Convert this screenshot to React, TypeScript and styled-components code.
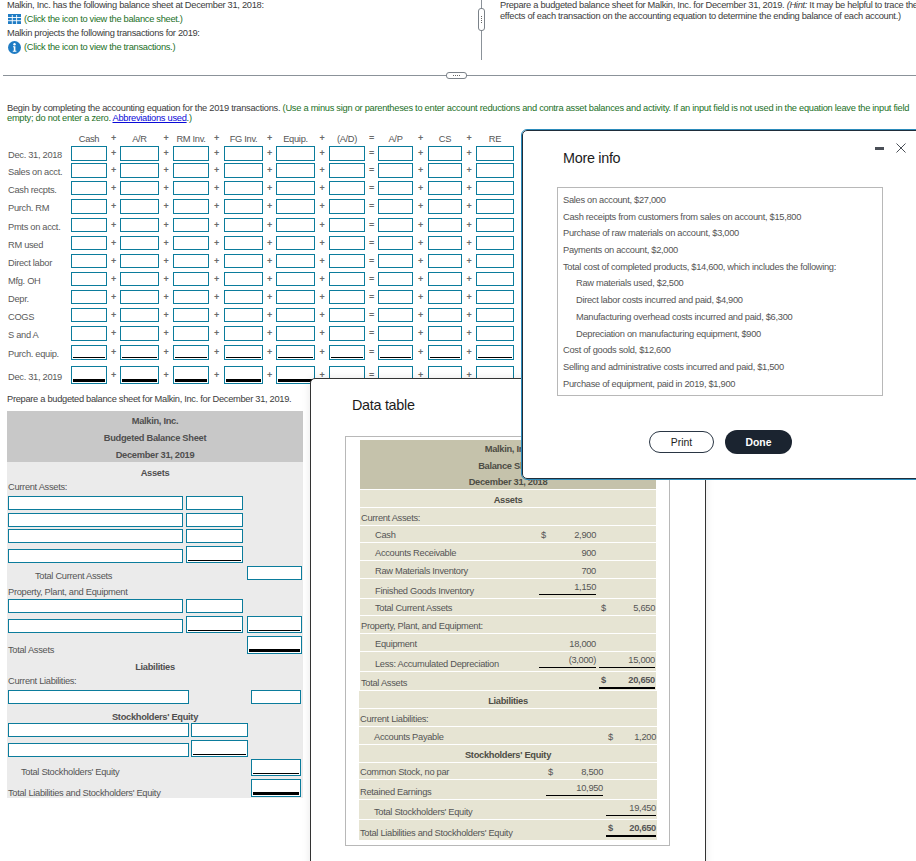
import React from "react";
import styled, { createGlobalStyle } from "styled-components";

const GlobalStyle = createGlobalStyle`
  html, body {
    margin: 0;
    padding: 0;
    background: #fff;
  }
  body {
    font-family: "Liberation Sans", Arial, sans-serif;
  }
`;

const FIELD = "#0b7c9c";

const Page = styled.div`
  position: relative;
  width: 916px;
  height: 861px;
  overflow: hidden;
  background: #fff;
  font-size: 9.3px;
  letter-spacing: -0.3px;
  color: #444;
`;

/* top panes */
const TopPanes = styled.div`
  display: flex;
  height: 60px;
`;

const LeftPane = styled.div`
  flex: none;
  width: 481px;
  padding: 0 0 0 7px;
  box-sizing: border-box;
  margin-top: -2px;
  line-height: 14px;
  color: #3c3c3c;
`;

const IconLine = styled.div`
  display: flex;
  align-items: center;
  gap: 3px;
  height: 14px;
  color: #23701f;
  svg {
    margin-left: 1px;
    flex: none;
  }
`;

const VerticalRule = styled.div`
  position: relative;
  flex: none;
  width: 1px;
  background: #8b9299;
`;

const VerticalGrip = styled.div`
  position: absolute;
  left: -3px;
  top: 8px;
  width: 5px;
  height: 21px;
  border: 1px solid #7b8289;
  border-radius: 3px;
  background: #fff;
  &::after {
    content: "";
    position: absolute;
    left: 2px;
    top: 7px;
    width: 1px;
    height: 7px;
    background: repeating-linear-gradient(#666 0 1px, transparent 1px 2px);
  }
`;

const RightPane = styled.div`
  padding-left: 18px;
  white-space: nowrap;
  line-height: 11px;
  color: #3c3c3c;
  em {
    font-style: italic;
  }
`;

const HorizontalRule = styled.div`
  position: relative;
  margin: 15px 0 0 3px;
  height: 1px;
  background: #8b9299;
`;

const HorizontalGrip = styled.div`
  position: absolute;
  left: 443px;
  top: -3px;
  width: 19px;
  height: 5px;
  border: 1px solid #7b8289;
  border-radius: 3px;
  background: #fff;
  &::after {
    content: "";
    position: absolute;
    left: 6px;
    top: 2px;
    width: 7px;
    height: 1px;
    background: repeating-linear-gradient(90deg, #666 0 1px, transparent 1px 2px);
  }
`;

const Instructions = styled.div`
  margin: 27px 0 0 7px;
  line-height: 10px;
  letter-spacing: -0.275px;
  white-space: nowrap;
  color: #3c3c3c;
  span {
    color: #23701f;
  }
  a {
    color: #0a0ad8;
    text-decoration: underline;
  }
`;

/* accounting equation */
const Equation = styled.div`
  margin-top: 8px;
`;

const EqHeader = styled.div`
  display: flex;
  height: 15px;
  align-items: center;
  padding-left: 71px;
  color: #555;
`;

const EqRow = styled.div<{ $pitch: number }>`
  display: flex;
  height: ${(p) => p.$pitch}px;
  align-items: flex-start;
`;

const EqLabel = styled.div<{ $h: number }>`
  width: 71px;
  box-sizing: border-box;
  padding: 2px 0 0 8px;
  line-height: ${(p) => p.$h}px;
  color: #5a5a5a;
  white-space: nowrap;
`;

const EqHead = styled.div<{ $w: number }>`
  width: ${(p) => p.$w}px;
  text-align: center;
  white-space: nowrap;
`;

const EqOp = styled.div<{ $w: number; $h?: number }>`
  width: ${(p) => p.$w}px;
  text-align: center;
  font-size: 9px;
  font-weight: bold;
  color: #6a6a6a;
  line-height: ${(p) => p.$h ?? 15}px;
`;

const Field = styled.div<{ $w?: number; $h: number; $rule?: "single" | "double" }>`
  position: relative;
  flex: none;
  justify-self: end;
  width: ${(p) => (p.$w ? `${p.$w}px` : "100%")};
  height: ${(p) => p.$h}px;
  box-sizing: border-box;
  border: 1px solid ${FIELD};
  background: #fff;
  ${(p) =>
    p.$rule
      ? `&::after {
          content: "";
          position: absolute;
          left: 1px;
          right: 1px;
          bottom: 1px;
          height: ${p.$rule === "double" ? 3 : 1}px;
          background: #000;
        }`
      : ""}
`;

/* budgeted sheet */
const SheetIntro = styled.div`
  margin: 8px 0 0 7px;
  line-height: 14px;
  color: #3c3c3c;
`;

const Sheet = styled.div`
  margin: 5px 0 0 7px;
  width: 296px;
  background: #ebebeb;
  padding-bottom: 1px;
`;

const SheetHead = styled.div`
  background: #c8c8c8;
`;

const TitleLine = styled.div`
  height: 17px;
  line-height: 20px;
  text-align: center;
  font-weight: bold;
  color: #4f4f4f;
`;

const SheetRow = styled.div<{ $pitch: number; $lower?: boolean }>`
  display: grid;
  grid-template-columns: ${(p) => (p.$lower ? "181px 57px 51px" : "175px 57px 56px")};
  column-gap: ${(p) => (p.$lower ? 2 : 3)}px;
  align-items: end;
  height: ${(p) => p.$pitch}px;
  padding-left: 1px;
`;

const SheetLabel = styled.div<{ $indent?: number }>`
  grid-column: 1 / span 2;
  padding-left: ${(p) => p.$indent ?? 0}px;
  line-height: 8px;
  color: #555;
  white-space: nowrap;
`;

const SheetTitle = styled.div<{ $pitch: number }>`
  height: ${(p) => p.$pitch}px;
  display: flex;
  align-items: flex-end;
  justify-content: center;
  line-height: 6px;
  font-weight: bold;
  color: #4f4f4f;
`;

const Blank = styled.div``;

/* dialogs */
const DataDialog = styled.div`
  position: absolute;
  left: 310px;
  top: 378px;
  width: 396px;
  height: 500px;
  box-sizing: border-box;
  border: 1px solid #333;
  border-top-left-radius: 5px;
  background: #fff;
  box-shadow: 0 0 8px rgba(0, 0, 0, 0.1);
  padding: 0 34px;
`;

const DialogTitle = styled.h2`
  margin: 0;
  font-size: 14.4px;
  line-height: 18px;
  font-weight: normal;
  color: #1c1c1c;
`;

const DataTitle = styled(DialogTitle)`
  margin: 17px 0 0 7px;
`;

const DataFrame = styled.div`
  margin-top: 22px;
  box-sizing: border-box;
  width: 325px;
  height: 410px;
  border: 1px solid #b8b8b8;
  padding: 3px 0 0 14px;
`;

const DataHead = styled.div`
  width: 296px;
  height: 50px;
  background: #c5c2ab;
  padding-top: 1px;
  box-sizing: border-box;
  border-bottom: 1px solid #fff;
`;

const DataHeadLine = styled.div`
  height: 16.5px;
  line-height: 16.5px;
  text-align: center;
  font-weight: bold;
  color: #4d4d45;
`;

const DataRow = styled.div<{ $h: number; $lower?: boolean }>`
  display: grid;
  grid-template-columns: ${(p) => (p.$lower ? "184px 57px 50px" : "176px 57px 56px")};
  column-gap: 3px;
  width: ${(p) => (p.$lower ? 298 : 296)}px;
  margin-left: ${(p) => (p.$lower ? -1 : 0)}px;
  height: ${(p) => p.$h}px;
  box-sizing: border-box;
  background: #e6e4d3;
  border-bottom: 1px solid #fff;
  color: #555;
`;

const DataTitleRow = styled(DataRow)`
  display: flex;
  align-items: flex-end;
  justify-content: center;
  line-height: 14px;
  font-weight: bold;
  color: #4d4d45;
`;

const DataLabel = styled.div<{ $indent?: boolean }>`
  align-self: end;
  padding-left: ${(p) => (p.$indent ? 15 : 1)}px;
  line-height: 14px;
  white-space: nowrap;
`;

const Money = styled.div<{ $rule?: "single" | "double" }>`
  display: flex;
  justify-content: space-between;
  box-sizing: border-box;
  padding: 0 0 0 2px;
  line-height: 14px;
  align-self: ${(p) => (p.$rule ? "start" : "end")};
  margin-top: ${(p) => (p.$rule ? 1 : 0)}px;
  border-bottom: ${(p) =>
    p.$rule === "double" ? "2.5px solid #000" : p.$rule === "single" ? "1px solid #000" : "none"};
  font-weight: ${(p) => (p.$rule === "double" ? "bold" : "normal")};
`;

const MoreDialog = styled.div`
  position: absolute;
  left: 522px;
  top: 130px;
  width: 430px;
  height: 349px;
  box-sizing: border-box;
  border: 1.5px solid #1f2d3a;
  border-radius: 5px;
  outline: 1px solid #2b8bbb;
  background: #fff;
  padding: 18px 0 0 40px;
`;

const WindowControls = styled.div`
  position: absolute;
  left: 352px;
  top: 12px;
  display: flex;
  align-items: center;
  gap: 12px;
`;

const InfoBox = styled.div`
  margin: 20px 0 0 -6px;
  box-sizing: border-box;
  width: 326px;
  height: 209px;
  border: 1px solid #b8b8b8;
  padding: 4px 0 0 5px;
`;

const InfoLine = styled.div<{ $indent?: boolean }>`
  height: 16.7px;
  line-height: 16.7px;
  padding-left: ${(p) => (p.$indent ? 13 : 0)}px;
  color: #555;
  white-space: nowrap;
`;

const Buttons = styled.div`
  display: flex;
  align-items: center;
  gap: 11px;
  margin: 34px 0 0 86px;
`;

const PrintButton = styled.button`
  width: 65px;
  height: 22px;
  border: 1.5px solid #2a3644;
  border-radius: 11px;
  background: #fff;
  padding: 0;
  font: 10.4px "Liberation Sans", Arial, sans-serif;
  color: #222;
`;

const DoneButton = styled.button`
  width: 67px;
  height: 24px;
  border: none;
  border-radius: 12px;
  background: #1b2430;
  padding: 0;
  font: bold 10.4px "Liberation Sans", Arial, sans-serif;
  color: #fff;
`;

const GridIcon = () => (
  <svg width="13" height="10" viewBox="0 0 13 10">
    <rect width="13" height="10" fill="#1f7cc4" />
    <path d="M0 3.5h13M0 6.7h13M4.3 1v9M8.6 1v9" stroke="#fff" strokeWidth="0.9" />
  </svg>
);

const InfoIcon = () => (
  <svg width="13" height="13" viewBox="0 0 13 13">
    <circle cx="6.5" cy="6.5" r="6.5" fill="#1f7cc4" />
    <circle cx="6.5" cy="3.2" r="1.2" fill="#fff" />
    <path d="M5 5.3h2.4v4.4h1v1H4.8v-1h1V6.3H5z" fill="#fff" />
  </svg>
);

const MinusIcon = () => (
  <svg width="9" height="3" viewBox="0 0 9 3">
    <rect width="9" height="3" fill="#4a4f57" />
  </svg>
);

const CloseIcon = () => (
  <svg width="10" height="10" viewBox="0 0 10 10">
    <path d="M0.5 0.5l9 9M9.5 0.5l-9 9" stroke="#4a4f57" strokeWidth="1" fill="none" />
  </svg>
);

const columns = [
  { name: "Cash", w: 36, gap: 13, op: "+" },
  { name: "A/R", w: 39, gap: 14, op: "+" },
  { name: "RM Inv.", w: 36, gap: 15, op: "+" },
  { name: "FG Inv.", w: 39, gap: 13, op: "+" },
  { name: "Equip.", w: 39, gap: 14, op: "+" },
  { name: "(A/D)", w: 36, gap: 13, op: "=" },
  { name: "A/P", w: 35, gap: 15, op: "+" },
  { name: "CS", w: 34, gap: 14, op: "+" },
  { name: "RE", w: 38, gap: 0, op: "" },
];

type Rule = "single" | "double";

const eqRows: { label: string; pitch: number; h: number; rule?: Rule }[] = [
  { label: "Dec. 31, 2018", pitch: 17, h: 15 },
  { label: "Sales on acct.", pitch: 18, h: 15 },
  { label: "Cash recpts.", pitch: 18, h: 14 },
  { label: "Purch. RM", pitch: 19, h: 15 },
  { label: "Pmts on acct.", pitch: 18, h: 14 },
  { label: "RM used", pitch: 18, h: 14 },
  { label: "Direct labor", pitch: 18, h: 14 },
  { label: "Mfg. OH", pitch: 18, h: 14 },
  { label: "Depr.", pitch: 18, h: 14 },
  { label: "COGS", pitch: 18, h: 14 },
  { label: "S and A", pitch: 19, h: 15 },
  { label: "Purch. equip.", pitch: 21, h: 15, rule: "single" },
  { label: "Dec. 31, 2019", pitch: 18, h: 18, rule: "double" },
];

const info: { text: string; indent?: boolean }[] = [
  { text: "Sales on account, $27,000" },
  { text: "Cash receipts from customers from sales on account, $15,800" },
  { text: "Purchase of raw materials on account, $3,000" },
  { text: "Payments on account, $2,000" },
  { text: "Total cost of completed products, $14,600, which includes the following:" },
  { text: "Raw materials used, $2,500", indent: true },
  { text: "Direct labor costs incurred and paid, $4,900", indent: true },
  { text: "Manufacturing overhead costs incurred and paid, $6,300", indent: true },
  { text: "Depreciation on manufacturing equipment, $900", indent: true },
  { text: "Cost of goods sold, $12,600" },
  { text: "Selling and administrative costs incurred and paid, $1,500" },
  { text: "Purchase of equipment, paid in 2019, $1,900" },
];

type Amount = { sign?: string; value?: string; rule?: Rule };

const dataRows: {
  h: number;
  label: string;
  title?: boolean;
  indent?: boolean;
  lower?: boolean;
  a?: Amount;
  b?: Amount;
}[] = [
  { h: 18, label: "Assets", title: true },
  { h: 18, label: "Current Assets:" },
  { h: 17, label: "Cash", indent: true, a: { sign: "$", value: "2,900" } },
  { h: 18, label: "Accounts Receivable", indent: true, a: { value: "900" } },
  { h: 18, label: "Raw Materials Inventory", indent: true, a: { value: "700" } },
  { h: 20, label: "Finished Goods Inventory", indent: true, a: { value: "1,150", rule: "single" } },
  { h: 17, label: "Total Current Assets", indent: true, b: { sign: "$", value: "5,650" } },
  { h: 18, label: "Property, Plant, and Equipment:" },
  { h: 18, label: "Equipment", indent: true, a: { value: "18,000" } },
  {
    h: 20,
    label: "Less: Accumulated Depreciation",
    indent: true,
    a: { value: "(3,000)", rule: "single" },
    b: { value: "15,000", rule: "single" },
  },
  { h: 19, label: "Total Assets", b: { sign: "$", value: "20,650", rule: "double" } },
  { h: 18, label: "Liabilities", title: true, lower: true },
  { h: 18, label: "Current Liabilities:", lower: true },
  { h: 18, label: "Accounts Payable", indent: true, lower: true, b: { sign: "$", value: "1,200" } },
  { h: 18, label: "Stockholders' Equity", title: true, lower: true },
  { h: 17, label: "Common Stock, no par", lower: true, a: { sign: "$", value: "8,500" } },
  { h: 20, label: "Retained Earnings", lower: true, a: { value: "10,950", rule: "single" } },
  { h: 20, label: "Total Stockholders' Equity", indent: true, lower: true, b: { value: "19,450", rule: "single" } },
  {
    h: 21,
    label: "Total Liabilities and Stockholders' Equity",
    lower: true,
    b: { sign: "$", value: "20,650", rule: "double" },
  },
];

const renderMoney = (m?: Amount) =>
  m ? (
    <Money $rule={m.rule}>
      <span>{m.sign}</span>
      <span>{m.value}</span>
    </Money>
  ) : (
    <Blank />
  );

export default function App() {
  return (
    <Page>
      <GlobalStyle />
      <TopPanes>
        <LeftPane>
          <div>Malkin, Inc. has the following balance sheet at December 31, 2018:</div>
          <IconLine>
            <GridIcon />
            (Click the icon to view the balance sheet.)
          </IconLine>
          <div>Malkin projects the following transactions for 2019:</div>
          <IconLine>
            <InfoIcon />
            (Click the icon to view the transactions.)
          </IconLine>
        </LeftPane>
        <VerticalRule>
          <VerticalGrip />
        </VerticalRule>
        <RightPane>
          Prepare a budgeted balance sheet for Malkin, Inc. for December 31, 2019.{" "}
          <em>(Hint:</em> It may be helpful to trace the
          <br />
          effects of each transaction on the accounting equation to determine the ending balance of each account.)
        </RightPane>
      </TopPanes>
      <HorizontalRule>
        <HorizontalGrip />
      </HorizontalRule>

      <Instructions>
        Begin by completing the accounting equation for the 2019 transactions.{" "}
        <span>
          (Use a minus sign or parentheses to enter account reductions and contra asset balances and activity. If an
          input field is not used in the equation leave the input field
          <br />
          empty; do not enter a zero.
        </span>{" "}
        <a href="#abbr">Abbreviations used</a>
        <span>.)</span>
      </Instructions>

      <Equation>
        <EqHeader>
          {columns.map((c) => (
            <React.Fragment key={c.name}>
              <EqHead $w={c.w}>{c.name}</EqHead>
              {c.op && <EqOp $w={c.gap}>{c.op}</EqOp>}
            </React.Fragment>
          ))}
        </EqHeader>
        {eqRows.map((row) => (
          <EqRow key={row.label} $pitch={row.pitch}>
            <EqLabel $h={row.h}>{row.label}</EqLabel>
            {columns.map((c) => (
              <React.Fragment key={c.name}>
                <Field $w={c.w} $h={row.h} $rule={row.rule} />
                {c.op && (
                  <EqOp $w={c.gap} $h={row.h}>
                    {c.op}
                  </EqOp>
                )}
              </React.Fragment>
            ))}
          </EqRow>
        ))}
      </Equation>

      <SheetIntro>Prepare a budgeted balance sheet for Malkin, Inc. for December 31, 2019.</SheetIntro>
      <Sheet>
        <SheetHead>
          <TitleLine>Malkin, Inc.</TitleLine>
          <TitleLine>Budgeted Balance Sheet</TitleLine>
          <TitleLine>December 31, 2019</TitleLine>
        </SheetHead>
        <SheetTitle $pitch={14}>Assets</SheetTitle>
        <SheetRow $pitch={15}>
          <SheetLabel>Current Assets:</SheetLabel>
        </SheetRow>
        <SheetRow $pitch={19}>
          <Field $h={14} />
          <Field $h={14} />
        </SheetRow>
        <SheetRow $pitch={17}>
          <Field $h={14} />
          <Field $h={14} />
        </SheetRow>
        <SheetRow $pitch={16}>
          <Field $h={14} />
          <Field $h={14} />
        </SheetRow>
        <SheetRow $pitch={20}>
          <Field $h={14} />
          <Field $h={17} $rule="single" />
        </SheetRow>
        <SheetRow $pitch={17}>
          <SheetLabel $indent={27}>Total Current Assets</SheetLabel>
          <Field $w={55} $h={14} />
        </SheetRow>
        <SheetRow $pitch={16}>
          <SheetLabel>Property, Plant, and Equipment</SheetLabel>
        </SheetRow>
        <SheetRow $pitch={17}>
          <Field $h={14} />
          <Field $h={14} />
        </SheetRow>
        <SheetRow $pitch={20}>
          <Field $h={14} />
          <Field $h={17} $rule="single" />
          <Field $w={55} $h={17} $rule="single" />
        </SheetRow>
        <SheetRow $pitch={21}>
          <SheetLabel>Total Assets</SheetLabel>
          <Field $w={55} $h={18} $rule="double" />
        </SheetRow>
        <SheetTitle $pitch={16}>Liabilities</SheetTitle>
        <SheetRow $pitch={15}>
          <SheetLabel>Current Liabilities:</SheetLabel>
        </SheetRow>
        <SheetRow $pitch={19} $lower>
          <Field $h={14} />
          <Blank />
          <Field $w={50} $h={14} />
        </SheetRow>
        <SheetTitle $pitch={16}>Stockholders' Equity</SheetTitle>
        <SheetRow $pitch={17} $lower>
          <Field $h={14} />
          <Field $h={14} />
        </SheetRow>
        <SheetRow $pitch={20} $lower>
          <Field $h={14} />
          <Field $h={17} $rule="single" />
        </SheetRow>
        <SheetRow $pitch={19} $lower>
          <SheetLabel $indent={13}>Total Stockholders' Equity</SheetLabel>
          <Field $w={50} $h={17} $rule="single" />
        </SheetRow>
        <SheetRow $pitch={21} $lower>
          <SheetLabel>Total Liabilities and Stockholders' Equity</SheetLabel>
          <Field $w={50} $h={18} $rule="double" />
        </SheetRow>
      </Sheet>

      <DataDialog>
        <DataTitle>Data table</DataTitle>
        <DataFrame>
          <DataHead>
            <DataHeadLine>Malkin, Inc.</DataHeadLine>
            <DataHeadLine>Balance Sheet</DataHeadLine>
            <DataHeadLine>December 31, 2018</DataHeadLine>
          </DataHead>
          {dataRows.map((row) =>
            row.title ? (
              <DataTitleRow key={row.label} $h={row.h} $lower={row.lower}>
                {row.label}
              </DataTitleRow>
            ) : (
              <DataRow key={row.label} $h={row.h} $lower={row.lower}>
                <DataLabel $indent={row.indent}>{row.label}</DataLabel>
                {renderMoney(row.a)}
                {renderMoney(row.b)}
              </DataRow>
            ),
          )}
        </DataFrame>
      </DataDialog>

      <MoreDialog>
        <WindowControls>
          <MinusIcon />
          <CloseIcon />
        </WindowControls>
        <DialogTitle>More info</DialogTitle>
        <InfoBox>
          {info.map((line) => (
            <InfoLine key={line.text} $indent={line.indent}>
              {line.text}
            </InfoLine>
          ))}
        </InfoBox>
        <Buttons>
          <PrintButton>Print</PrintButton>
          <DoneButton>Done</DoneButton>
        </Buttons>
      </MoreDialog>
    </Page>
  );
}
